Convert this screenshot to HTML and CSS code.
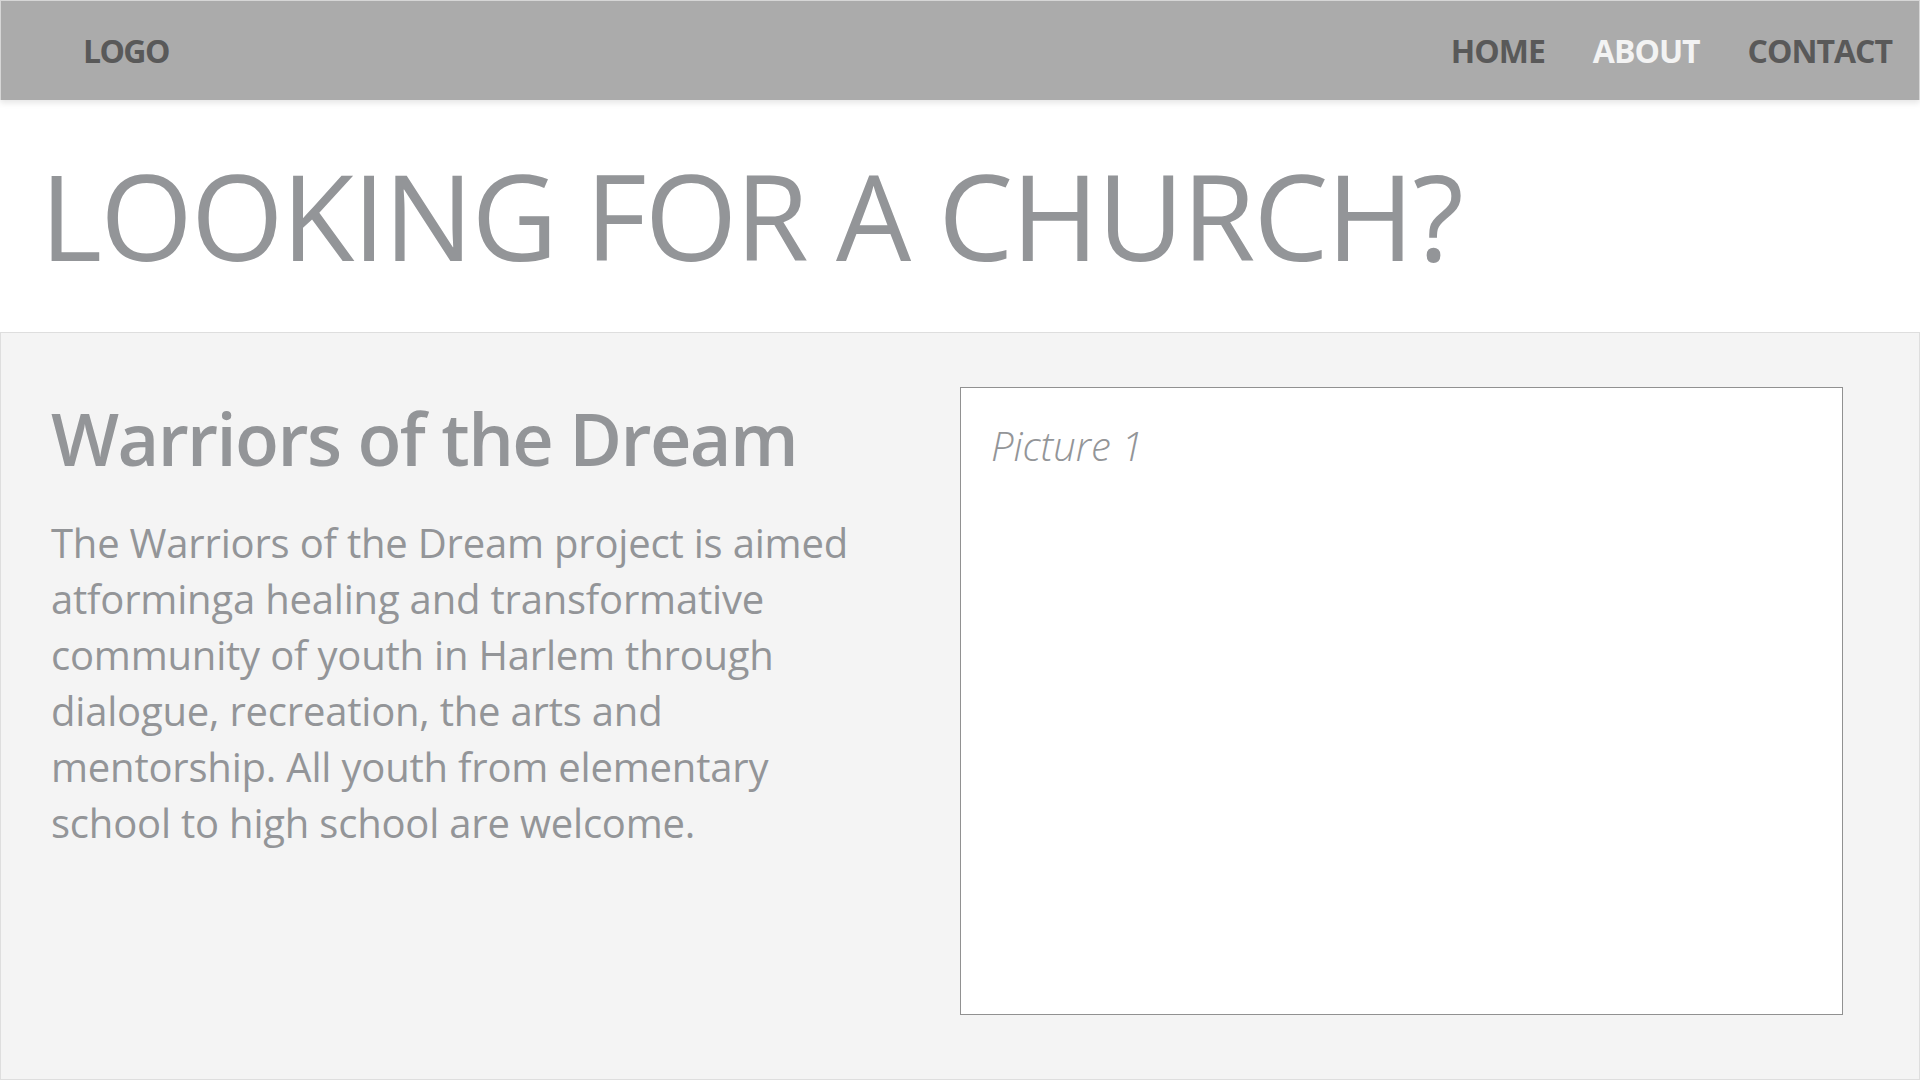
FILE: index.html
```html
<!DOCTYPE html>
<html lang="en">
<head>
<meta charset="utf-8">
<title>Looking for a church?</title>
<link rel="stylesheet" href="styles.css">
</head>
<body>
<header class="topbar">
  <div class="logo">LOGO</div>
  <nav class="nav">
    <a class="nav-link" href="#">HOME</a>
    <a class="nav-link nav-link--active" href="#">ABOUT</a>
    <a class="nav-link" href="#">CONTACT</a>
  </nav>
</header>
<section class="hero">
  <h1 class="hero-title">LOOKING FOR A CHURCH?</h1>
</section>
<section class="feature">
  <div class="feature-text">
    <h2 class="feature-title">Warriors of the Dream</h2>
    <p class="feature-body">The Warriors of the Dream project is aimed atforminga healing and transformative community of youth in Harlem through dialogue, recreation, the arts and mentorship. All youth from elementary school to high school are welcome.</p>
  </div>
  <div class="picture">
    <span class="picture-label">Picture 1</span>
  </div>
</section>
</body>
</html>
```
FILE: styles.css
```css
* { box-sizing: border-box; }
html, body { margin: 0; padding: 0; }
body {
  width: 1920px;
  height: 1080px;
  overflow: hidden;
  background: #ffffff;
  font-family: "Open Sans", "Noto Sans", sans-serif;
  color: #939598;
}
.topbar {
  position: relative;
  z-index: 2;
  height: 100px;
  display: flex;
  align-items: center;
  justify-content: space-between;
  padding: 0 27px 0 82px;
  background: #ababab;
  border-top: 1px solid #d6d6d6;
  border-left: 1px solid #d6d6d6;
  border-right: 1px solid #d6d6d6;
  box-shadow: 0 3px 6px rgba(0, 0, 0, 0.10);
}
.logo, .nav-link {
  font-size: 32px;
  font-weight: 700;
  color: #595959;
  text-decoration: none;
  letter-spacing: -1px;
}
.logo { letter-spacing: -1.6px; }
.nav { display: flex; gap: 48px; }
.nav-link--active { color: #f3f3f3; }
.hero {
  height: 232px;
  padding: 50px 0 0 40px;
}
.hero-title {
  margin: 0;
  font-size: 119px;
  font-weight: 400;
  line-height: 130px;
  color: #939598;
  letter-spacing: -1.9px;
  white-space: nowrap;
}
.feature {
  height: 748px;
  display: grid;
  grid-template-columns: 1fr 883px;
  column-gap: 50px;
  padding: 54px 76px 64px 50px;
  background: #f4f4f4;
  border: 1px solid #dedede;
}
.feature-title {
  margin: 0;
  padding-top: 6px;
  font-size: 72px;
  font-weight: 600;
  line-height: 90px;
  letter-spacing: -1.6px;
  color: #939598;
}
.feature-body {
  max-width: 820px;
  margin: 32px 0 0;
  font-size: 40px;
  line-height: 56px;
  letter-spacing: -0.2px;
  color: #939598;
}
.picture {
  background: #ffffff;
  border: 1px solid #919191;
  padding: 30px 30px;
}
.picture-label {
  font-size: 40px;
  font-style: italic;
  font-weight: 300;
  color: #939598;
}
```
